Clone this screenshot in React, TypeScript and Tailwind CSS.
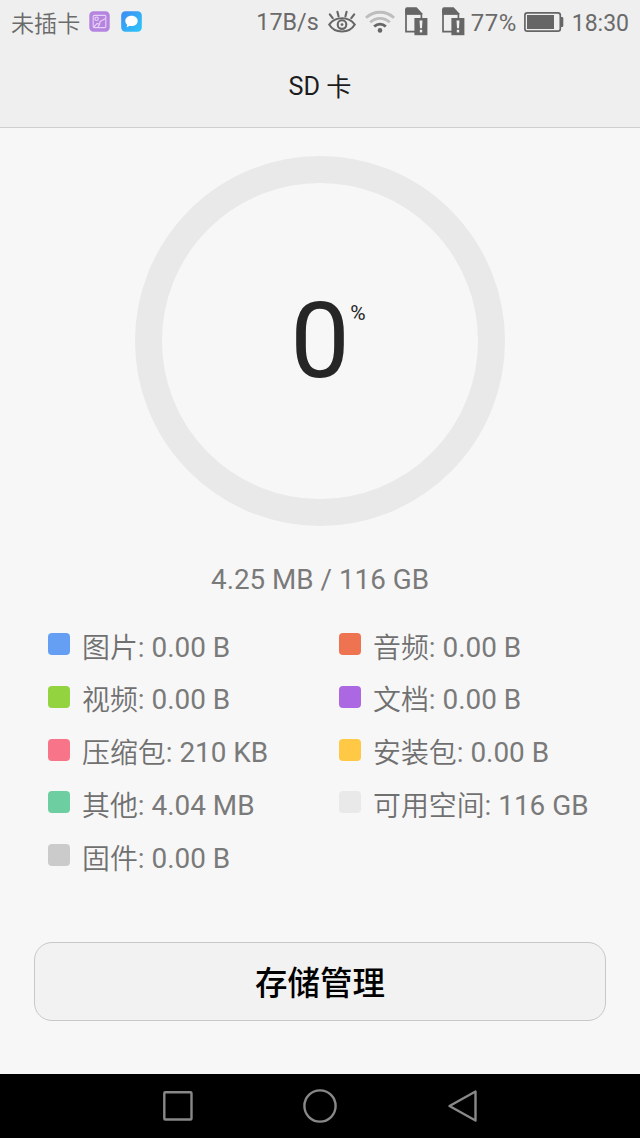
import clsx from "clsx";

type Category = { label: string; size: string; color: string };

const categories: Category[] = [
  { label: "图片", size: "0.00 B", color: "bg-[#649ff3]" },
  { label: "音频", size: "0.00 B", color: "bg-[#ee7350]" },
  { label: "视频", size: "0.00 B", color: "bg-[#92d33f]" },
  { label: "文档", size: "0.00 B", color: "bg-[#ac68e3]" },
  { label: "压缩包", size: "210 KB", color: "bg-[#f87488]" },
  { label: "安装包", size: "0.00 B", color: "bg-[#ffc845]" },
  { label: "其他", size: "4.04 MB", color: "bg-[#6dcea2]" },
  { label: "可用空间", size: "116 GB", color: "bg-[#e9e9e9]" },
  { label: "固件", size: "0.00 B", color: "bg-[#cbcbcb]" },
];

function GalleryIcon() {
  return (
    <svg className="ml-[9px] mb-px" width="21" height="21" viewBox="0 0 21 21" fill="none">
      <rect x="0.3" y="0.3" width="20.4" height="20.4" rx="4.2" fill="#b584e0" />
      <rect x="4.2" y="4.4" width="12.6" height="12.2" rx="1" stroke="#e6d2f5" strokeWidth="1.1" />
      <circle cx="7.6" cy="7.8" r="1.7" stroke="#e6d2f5" strokeWidth="1.1" />
      <path d="M4.8 16L8.2 12.4L10.6 13.4M8.8 16.2L10.6 13.4L11 10.6L16.4 7.4" stroke="#e6d2f5" strokeWidth="1.2" />
    </svg>
  );
}

function MessageIcon() {
  return (
    <svg className="ml-[11px] mb-px" width="21" height="21" viewBox="0 0 21 21">
      <defs>
        <linearGradient id="message" x1="0" y1="0" x2="1" y2="1">
          <stop offset="0" stopColor="#3d8af2" />
          <stop offset="1" stopColor="#2cc8fb" />
        </linearGradient>
      </defs>
      <rect x="0.2" y="0.2" width="20.6" height="20.6" rx="4.2" fill="url(#message)" />
      <path
        d="M10.5 4.8C14 4.8 16.7 7 16.7 9.9S14 15 10.5 15C9.8 15 9.1 14.9 8.5 14.8C7.5 15.6 6.5 16.1 5.4 16.3C5.9 15.6 6.2 14.7 6.2 13.7C5 12.8 4.3 11.4 4.3 9.9C4.3 7 7 4.8 10.5 4.8Z"
        fill="#fff"
      />
    </svg>
  );
}

function EyeIcon() {
  return (
    <svg className="mb-px" width="28" height="24" viewBox="0 0 28 24" fill="none" stroke="#666" strokeLinecap="round">
      <path
        d="M1.2 14.6C4 10.5 8.5 8.2 14 8.2S24 10.5 26.8 14.6C24 19.4 19.6 21.6 14 21.6S4 19.4 1.2 14.6Z"
        strokeWidth="2"
      />
      <circle cx="14" cy="14.6" r="4.3" strokeWidth="2.1" />
      <circle cx="14" cy="14.6" r="1.4" fill="#666" stroke="none" />
      <path d="M1.8 4.4L4.7 8.2M9.4 1.8L10.6 6.4M18.6 1.8L17.4 6.4M26.2 4.4L23.3 8.2" strokeWidth="2.1" />
    </svg>
  );
}

function WifiIcon() {
  return (
    <svg width="30" height="24" viewBox="0 0 30 24" fill="none" strokeWidth="2.8">
      <path d="M1 7.8C9 0.4 21 0.4 29 7.8" stroke="#bdbdbd" />
      <path d="M5.2 12.3C11 7 19 7 24.8 12.3" stroke="#bdbdbd" />
      <path d="M9.2 16.6C12.6 13.2 17.4 13.2 20.8 16.6" stroke="#666" strokeWidth="2.8" />
      <circle cx="15" cy="20.4" r="2.3" fill="#666" />
    </svg>
  );
}

function SimAlertIcon() {
  return (
    <svg className="mb-[2px]" width="23" height="29" viewBox="0 0 23 29" fill="none">
      <path d="M1 2V24.6H10M1.2 7H16.4V11" stroke="#666" strokeWidth="1.7" />
      <path d="M0.2 2Q0.2 0.3 2 0.3H11.6L17.2 6.2V7.6H0.2Z" fill="#666" />
      <rect x="9.4" y="11" width="13" height="17.2" fill="#666" />
      <path d="M14.5 13.5H17.5L17 21.2H15Z" fill="#efefef" />
      <rect x="14.8" y="22.8" width="2.4" height="2.6" fill="#efefef" />
    </svg>
  );
}

function BatteryIcon() {
  return (
    <svg width="40" height="20" viewBox="0 0 40 20" fill="none">
      <rect x="0.9" y="0.9" width="35.4" height="18.2" rx="2.4" stroke="#666" strokeWidth="1.7" />
      <rect x="3" y="3" width="27" height="14" fill="#666" />
      <path d="M36.5 5H38Q39.3 5 39.3 6.3V13.7Q39.3 15 38 15H36.5Z" fill="#666" />
    </svg>
  );
}

function StatusBar() {
  return (
    <div className="flex h-11 items-center pl-[11px] pr-[11px] text-[23.3px] text-[#6a6a6a]">
      <span className="pt-[5px] text-[23.1px] font-[350]">未插卡</span>
      <GalleryIcon />
      <MessageIcon />
      <div className="ml-auto flex items-center">
        <span className="mr-[9px] pt-[2px]">17B/s</span>
        <EyeIcon />
        <span className="w-[9px]" />
        <WifiIcon />
        <span className="w-[10px]" />
        <SimAlertIcon />
        <span className="w-[14px]" />
        <SimAlertIcon />
        <span className="ml-[6px] mr-[7px] pt-[2px] text-[24px] tracking-[0.5px]">77%</span>
        <BatteryIcon />
        <span className="ml-[8px] pt-[2px] text-[23px]">18:30</span>
      </div>
    </div>
  );
}

function UsageRing() {
  return (
    <div className="mx-auto mt-7 flex h-[370px] w-[370px] items-center justify-center rounded-full border-[27px] border-[#e9e9e9]">
      <div className="relative text-[106px] leading-none text-[#262626]">
        0
        <span className="absolute left-[60px] top-[15px] text-[21px] leading-none">%</span>
      </div>
    </div>
  );
}

function Legend() {
  return (
    <div className="mt-[26px] grid grid-cols-[291px_1fr] pl-12">
      {categories.map((c) => (
        <div key={c.label} className="flex h-[52.75px] items-center">
          <span className={clsx("mb-[4px] h-[22px] w-[22px] rounded-[4px]", c.color)} />
          <div className="ml-3 flex whitespace-pre text-[27.9px] text-[#7a7a7a]">
            <span className="pt-[5px] font-[350] text-[#707070]">{c.label}</span>
            <span className="pt-[4px]">: {c.size}</span>
          </div>
        </div>
      ))}
    </div>
  );
}

function NavBar() {
  return (
    <div className="flex h-16 items-center justify-center bg-black">
      <svg width="320" height="36" viewBox="0 0 320 36" fill="none" stroke="#888" strokeWidth="2.4">
        <rect x="4.3" y="4.3" width="27.2" height="27.2" rx="1" />
        <circle cx="160" cy="18" r="15.6" />
        <path d="M289.5 18L315.5 3.5V32.5Z" strokeLinejoin="round" />
      </svg>
    </div>
  );
}

export default function App() {
  return (
    <div className="flex h-[1138px] w-[640px] flex-col overflow-hidden bg-[#f7f7f7] font-['Roboto','Noto_Sans_CJK_SC',sans-serif] leading-none">
      <header className="h-32 border-b border-[#cfcfcf] bg-[#efefef]">
        <StatusBar />
        <h1 className="flex h-[84px] items-center justify-center whitespace-pre text-[25.2px] text-[#1c1c1c]">
          <span className="pt-px">SD </span>
          <span className="pt-[3px]">卡</span>
        </h1>
      </header>
      <main className="flex-1">
        <UsageRing />
        <p className="mt-[40px] text-center text-[27.8px] text-[#7a7a7a]">4.25 MB / 116 GB</p>
        <Legend />
        <button className="ml-[34px] mt-[58px] flex h-[79px] w-[572px] items-center justify-center rounded-[18px] border border-[#c8c8c8] bg-[#f2f2f2] pt-[7px] text-[32.5px] font-medium text-black">
          存储管理
        </button>
      </main>
      <NavBar />
    </div>
  );
}
